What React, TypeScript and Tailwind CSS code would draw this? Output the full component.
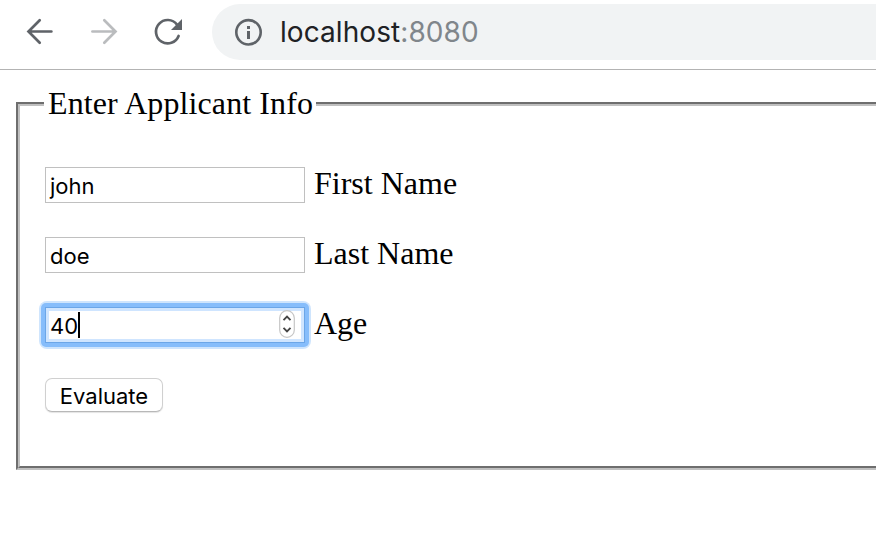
import type { ReactNode } from 'react';

function Toolbar() {
  return (
    <header className="flex h-[70px] items-start border-b border-[#b3b3b3] bg-white pt-1">
      <svg className="h-14 w-[212px] shrink-0" viewBox="0 4 212 56" fill="none" strokeLinecap="round">
        <path d="M39.7 20.3 28.5 31.5l11.2 11.2M28.7 31.5h22.7" stroke="#5f6368" strokeWidth="2.7" />
        <path d="m104.3 20.3 11.2 11.2-11.2 11.2M115.3 31.5H92.4" stroke="#babcbe" strokeWidth="2.7" />
        <path d="M177 24.6A11.7 11.7 0 1 0 178.6 36" stroke="#5f6368" strokeWidth="2.7" />
        <path d="M182 19v11h-11z" fill="#5f6368" />
      </svg>
      <div className="flex h-14 flex-1 items-center rounded-l-full bg-[#f1f3f4] pl-[22px]">
        <svg className="h-7 w-7 shrink-0" viewBox="234 18 28 28" fill="none">
          <circle cx="248.5" cy="32.3" r="12.2" stroke="#5f6368" strokeWidth="2.6" />
          <path d="M247 26h3v3h-3zM247 31h3v8h-3z" fill="#5f6368" />
        </svg>
        <p className="ml-[18px] whitespace-nowrap font-['Inter',sans-serif] text-[28px] leading-9 tracking-[0.07px] text-[#202124]">
          localhost<span className="text-[#80868b]">:8080</span>
        </p>
      </div>
    </header>
  );
}

function Row({ label, children }: { label: string; children: ReactNode }) {
  return (
    <label className="flex h-9 items-center gap-[9px]">
      {children}
      <span className="-mt-1 whitespace-nowrap leading-9">{label}</span>
    </label>
  );
}

const fieldText = "font-['Inter',sans-serif] text-[22px] text-black";

export default function App() {
  return (
    <div className="h-[546px] w-full overflow-hidden bg-white font-['Liberation_Serif',serif] text-[32px] text-black">
      <Toolbar />
      <main className="pt-8 pl-4">
        <section className="h-[368px] border-y-2 border-l-2 border-t-[#6e6e6e] border-b-[#c0c0c0] border-l-[#6e6e6e]">
          <div className="h-full border-y-2 border-l-2 border-t-[#c0c0c0] border-b-[#6e6e6e] border-l-[#c0c0c0] pl-[25px]">
            <h1 className="-mt-5 -ml-px flex h-9 w-[272px] items-center bg-white pb-[2px] pl-1 leading-9 tracking-[0.1px] whitespace-nowrap">
              Enter Applicant Info
            </h1>
            <form className="mt-[45px] flex flex-col gap-[34px]">
              <Row label="First Name">
                <span className={`flex h-9 w-[260px] items-center border border-[#c0c0c0] pt-[3px] pl-1 ${fieldText}`}>
                  john
                </span>
              </Row>
              <Row label="Last Name">
                <span className={`flex h-9 w-[260px] items-center border border-[#c0c0c0] pt-[3px] pl-1 ${fieldText}`}>
                  doe
                </span>
              </Row>
              <Row label="Age">
                <span className="-mx-[6px] -my-[6px] rounded-[8px] bg-[#cfe5fd] p-[2px]">
                  <span className="block rounded-[5px] bg-[#86bdfb] p-1">
                    <span
                      className={`flex h-9 w-[260px] items-center border border-[#6ba6e8] bg-white pr-[9px] pb-px pl-1 shadow-[inset_0_0_0_3px_#cfe5ff] ${fieldText}`}
                    >
                      <span className="pt-[3px]">40</span>
                      <span className="h-[26px] w-[2px] bg-black" />
                      <svg className="-mt-[2px] ml-auto h-7 w-4" viewBox="0 0 16 28" fill="none">
                        <rect x=".7" y=".7" width="14.6" height="26.6" rx="7.3" fill="#fff" stroke="#c6c6c6" strokeWidth="1.2" />
                        <path d="m4.5 10.2 3.5-3.5 3.5 3.5M4.5 17.8l3.5 3.5 3.5-3.5" stroke="#444" strokeWidth="1.9" />
                      </svg>
                    </span>
                  </span>
                </span>
              </Row>
              <button
                type="button"
                className={`mt-px flex h-[34px] w-[118px] items-center justify-center rounded-[7px] border border-[#d0d0d0] border-b-[#b8b8b8] bg-white pt-[2px] shadow-[0_1px_1px_#e4e4e4] ${fieldText}`}
              >
                Evaluate
              </button>
            </form>
          </div>
        </section>
      </main>
    </div>
  );
}
